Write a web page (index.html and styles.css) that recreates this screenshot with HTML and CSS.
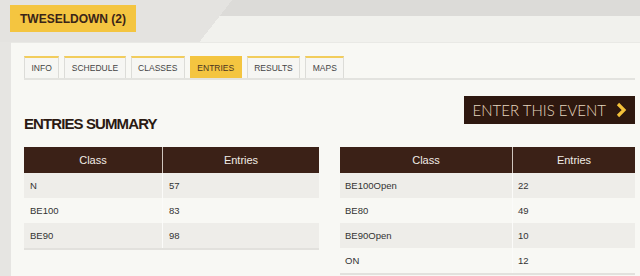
FILE: index.html
```html
<!DOCTYPE html>
<html lang="en">
<head>
    <meta charset="UTF-8">
    <title>Tweseldown (2) - Entries</title>
    <link rel="stylesheet" href="styles.css">
</head>
<body>
    <div class="top">
        <h1 class="event-title">TWESELDOWN (2)</h1>
    </div>

    <div class="panel">
        <ul class="tabs">
            <li>INFO</li>
            <li>SCHEDULE</li>
            <li>CLASSES</li>
            <li class="active">ENTRIES</li>
            <li>RESULTS</li>
            <li>MAPS</li>
        </ul>

        <div class="summary-head">
            <h2>ENTRIES SUMMARY</h2>
            <a class="enter-btn" href="#">
                ENTER THIS EVENT
                <svg width="12" height="16" viewBox="0 0 12 16"><polyline points="3,2 9,8 3,14" fill="none" stroke="#f3c13a" stroke-width="3.2"/></svg>
            </a>
        </div>

        <div class="tables">
            <table class="entries left">
                <thead>
                    <tr><th>Class</th><th>Entries</th></tr>
                </thead>
                <tbody>
                    <tr><td>N</td><td>57</td></tr>
                    <tr><td>BE100</td><td>83</td></tr>
                    <tr><td>BE90</td><td>98</td></tr>
                </tbody>
            </table>
            <table class="entries right">
                <thead>
                    <tr><th>Class</th><th>Entries</th></tr>
                </thead>
                <tbody>
                    <tr><td>BE100Open</td><td>22</td></tr>
                    <tr><td>BE80</td><td>49</td></tr>
                    <tr><td>BE90Open</td><td>10</td></tr>
                    <tr><td>ON</td><td>12</td></tr>
                </tbody>
            </table>
        </div>
    </div>
</body>
</html>
```

FILE: styles.css
```css
body {
    margin: 0;
    font-family: "Liberation Sans", Arial, sans-serif;
    background-color: #e6e5e2;
    color: #333;
    overflow: hidden;
}

.top {
    height: 42px;
    padding-top: 5px;
    box-sizing: border-box;
    background:
        linear-gradient(128deg, #e4e3e0 183px, transparent 183px),
        linear-gradient(to bottom, #dcdbd8 16px, #f1f1ed 16px);
}

.event-title {
    display: inline-block;
    margin: 0 0 0 10px;
    height: 27px;
    line-height: 28px;
    padding: 0 10px;
    background-color: #f4c540;
    color: #3a2418;
    font-size: 12px;
    font-weight: bold;
}

.panel {
    margin-left: 11px;
    padding: 13px 5px 0 13px;
    min-height: 220px;
    background-color: #f8f8f4;
    border-top: 1px solid #e9e9e5;
}

.tabs {
    display: flex;
    gap: 5px;
    margin: 0;
    padding: 0;
    list-style: none;
    border-bottom: 2px solid #e3e3df;
}

.tabs li {
    height: 20px;
    line-height: 21px;
    padding: 0 6.5px;
    border: 1px solid #dcdcd8;
    border-top: 2px solid #f2cd5c;
    border-bottom: none;
    background-color: #f6f6f3;
    color: #444;
    font-size: 8.5px;
}

.tabs li.active {
    background-color: #f4c540;
    border-color: #f4c540;
    color: #4a3420;
}

.summary-head {
    display: flex;
    justify-content: space-between;
    align-items: flex-start;
    margin-top: 16px;
}

.summary-head h2 {
    margin: 19px 0 0 0;
    font-size: 15px;
    line-height: 18px;
    letter-spacing: -0.9px;
    color: #2b1a12;
}

.enter-btn {
    display: flex;
    align-items: center;
    gap: 9px;
    height: 28px;
    padding: 0 8px 0 9px;
    background-color: #2e180f;
    color: #e6d7bf;
    font-family: Lato, sans-serif;
    font-weight: 300;
    font-size: 15px;
    text-decoration: none;
}

.tables {
    display: grid;
    grid-template-columns: 295px 295px;
    gap: 21px;
    align-items: start;
    margin-top: 14px;
}

.entries {
    width: 100%;
    border-collapse: collapse;
    border-bottom: 2px solid #e2e1dd;
}

.entries th {
    height: 26px;
    padding: 0;
    background-color: #3b2117;
    color: #f1ece6;
    font-size: 11px;
    font-weight: normal;
}

.entries th + th {
    border-left: 1px solid #cfc6bd;
}

.entries td {
    height: 25px;
    padding: 0 0 0 6px;
    font-size: 9.5px;
    color: #333;
}

.entries td + td {
    border-left: 1px solid #fbfbf9;
}

.entries tbody tr:nth-child(odd) {
    background-color: #eeede9;
}

.left th:first-child {
    width: 138px;
}

.right th:first-child {
    width: 172px;
}

.right td {
    padding-left: 5px;
}
```
